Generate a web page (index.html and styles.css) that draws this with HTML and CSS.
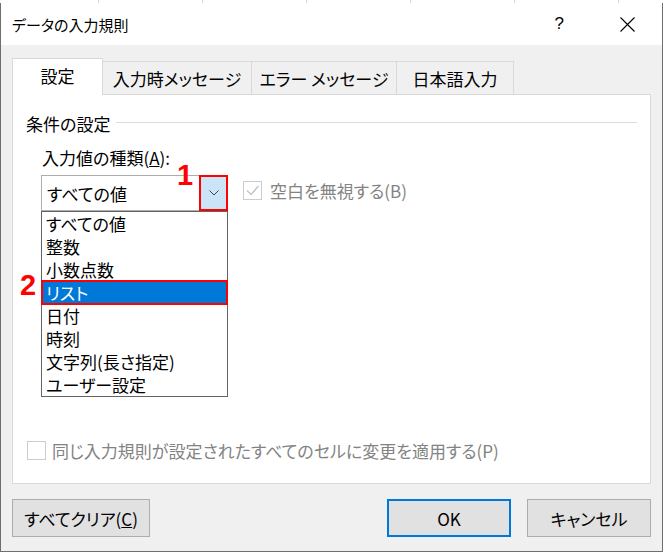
FILE: index.html
```html
<!DOCTYPE html>
<html lang="ja">
<head>
    <meta charset="UTF-8">
    <meta name="viewport" content="width=device-width, initial-scale=1.0">
    <title>データの入力規則</title>
    <link rel="stylesheet" href="styles.css">
</head>
<body>
    <div class="screen">
        <div class="sheet-edge"></div>
        <div class="window">
            <div class="titlebar">
                <span class="title">データの入力規則</span>
                <span class="help">?</span>
                <svg class="close" width="15" height="15" viewBox="0 0 15 15">
                    <path d="M0.5 0.5 L14.5 14.5 M14.5 0.5 L0.5 14.5" stroke="#000" stroke-width="1.1" fill="none"/>
                </svg>
            </div>
            <div class="content">
                <div class="tabs">
                    <div class="tab active tab1">設定</div>
                    <div class="tab tab2">入力時メッセージ</div>
                    <div class="tab tab3">エラー メッセージ</div>
                    <div class="tab tab4">日本語入力</div>
                </div>
                <div class="panel">
                    <div class="group-head">
                        <span>条件の設定</span>
                        <span class="rule"></span>
                    </div>
                    <div class="field-label">入力値の種類(<u>A</u>):</div>
                    <div class="row">
                        <div class="combo-wrap">
                            <div class="combo">
                                <span class="combo-text">すべての値</span>
                                <span class="combo-btn">
                                    <svg width="10" height="6" viewBox="0 0 10 6">
                                        <path d="M0.5 0.5 L5 5 L9.5 0.5" stroke="#444" stroke-width="1" fill="none"/>
                                    </svg>
                                </span>
                            </div>
                            <ul class="list">
                                <li>すべての値</li>
                                <li>整数</li>
                                <li>小数点数</li>
                                <li class="selected">リスト</li>
                                <li>日付</li>
                                <li>時刻</li>
                                <li>文字列(長さ指定)</li>
                                <li>ユーザー設定</li>
                            </ul>
                        </div>
                        <div class="check blank">
                            <span class="box">
                                <svg width="17" height="17" viewBox="0 0 17 17">
                                    <path d="M3 8.5 L7 12.5 L14.5 4" stroke="#c4c4c4" stroke-width="1.4" fill="none"/>
                                </svg>
                            </span>
                            <span class="check-label">空白を無視する(B)</span>
                        </div>
                    </div>
                    <div class="check apply">
                        <span class="box"></span>
                        <span class="check-label">同じ入力規則が設定されたすべてのセルに変更を適用する(P)</span>
                    </div>
                </div>
                <div class="buttons">
                    <button class="btn clear">すべてクリア(<u>C</u>)</button>
                    <button class="btn ok">OK</button>
                    <button class="btn cancel">キャンセル</button>
                </div>
            </div>
        </div>
        <span class="mark mark1">1</span>
        <span class="mark mark2">2</span>
    </div>
</body>
</html>
```

FILE: styles.css
```css
body{
    margin: 0;
    background-color: #fff;
    font-family: "Noto Sans CJK JP", sans-serif;
    font-feature-settings: "palt";
    color: #000;
}
.screen{
    position: relative;
    width: 663px;
    height: 552px;
    display: flex;
    flex-direction: column;
    overflow: hidden;
}
.sheet-edge{
    height: 3px;
    background-color: #fff;
    background-image: repeating-linear-gradient(to right, transparent 0, transparent 103px, #d6d6d6 103px, #d6d6d6 104px);
    background-position: -5px 0;
}
.window{
    flex: 1;
    display: flex;
    flex-direction: column;
    background-color: #f0f0f0;
    border: 1px solid #6e6e6e;
    border-top: none;
}
.titlebar{
    height: 42px;
    background-color: #fff;
    display: flex;
    align-items: center;
    padding-left: 11px;
}
.title{
    flex: 1;
    font-size: 15px;
}
.help{
    font-family: "Liberation Sans", sans-serif;
    font-size: 17px;
    margin-right: 56px;
}
.close{
    margin-right: 27px;
}

.content{
    flex: 1;
    display: flex;
    flex-direction: column;
    padding: 13px 11px 14px 11px;
}
.tabs{
    display: flex;
    align-items: flex-end;
    height: 36px;
}
.tab{
    box-sizing: border-box;
    height: 33px;
    border: 1px solid #d9d9d9;
    border-bottom: none;
    margin-left: -1px;
    display: flex;
    align-items: center;
    justify-content: center;
    font-size: 17px;
}
.tab.active{
    height: 37px;
    margin-left: 0;
    margin-bottom: -1px;
    background-color: #fff;
    position: relative;
    z-index: 1;
    padding-bottom: 3px;
}
.tab1{ width: 91px; }
.tab2{ width: 150px; }
.tab3{ width: 146px; }
.tab4{ width: 118px; }

.panel{
    box-sizing: border-box;
    height: 390px;
    background-color: #fff;
    border: 1px solid #d9d9d9;
    display: flex;
    flex-direction: column;
    font-size: 17px;
}
.group-head{
    display: flex;
    align-items: center;
    margin: 19px 13px 0 13px;
    line-height: 20px;
}
.rule{
    flex: 1;
    height: 1px;
    margin-left: 6px;
    margin-top: -3px;
    background-color: #dcdcdc;
}
.field-label{
    margin: 14px 0 0 29px;
    line-height: 20px;
}
.row{
    display: flex;
    margin: 7px 0 0 28px;
}
.combo-wrap{
    width: 187px;
}
.combo{
    box-sizing: border-box;
    height: 36px;
    border: 1px solid #adadad;
    display: flex;
    align-items: center;
}
.combo-text{
    flex: 1;
    padding-left: 5px;
}
.combo-btn{
    box-sizing: border-box;
    width: 29px;
    height: 36px;
    margin: -1px -1px -1px 0;
    border: 2px solid #f00;
    background-color: #cce4f7;
    display: flex;
    align-items: center;
    justify-content: center;
}
.list{
    list-style: none;
    margin: 0;
    padding: 0;
    border: 1px solid #646464;
    background-color: #fff;
}
.list li{
    height: 23px;
    line-height: 23px;
    padding-left: 4px;
}
.list li.selected{
    background-color: #0078d7;
    color: #fff;
    box-shadow: 0 0 0 1px #f00, inset 0 0 0 1px #f00;
}

.check{
    display: flex;
    align-items: center;
    color: #838383;
}
.box{
    box-sizing: border-box;
    width: 19px;
    height: 19px;
    border: 1px solid #cccccc;
    background-color: #fff;
    display: flex;
    align-items: center;
    justify-content: center;
}
.blank{
    align-self: flex-start;
    margin: 3px 0 0 15px;
}
.blank .check-label{
    margin-left: 8px;
}
.apply{
    margin: auto 0 20px 14px;
}
.apply .check-label{
    margin-left: 6px;
}

.buttons{
    display: flex;
    margin-top: 15px;
}
.btn{
    box-sizing: border-box;
    height: 38px;
    width: 124px;
    background-color: #e1e1e1;
    border: 1px solid #adadad;
    font-family: "Noto Sans CJK JP", sans-serif;
    font-feature-settings: "palt";
    font-size: 17px;
    color: #000;
    padding: 0;
}
.btn.clear{
    width: 138px;
}
.btn.ok{
    margin-left: auto;
    border: 2px solid #0078d7;
}
.btn.cancel{
    margin-left: 16px;
}

.mark{
    position: absolute;
    font-family: "Liberation Sans", sans-serif;
    font-weight: 700;
    font-size: 29px;
    line-height: 29px;
    color: #f00;
}
.mark1{
    left: 177px;
    top: 161px;
}
.mark2{
    left: 20px;
    top: 271px;
}
```
